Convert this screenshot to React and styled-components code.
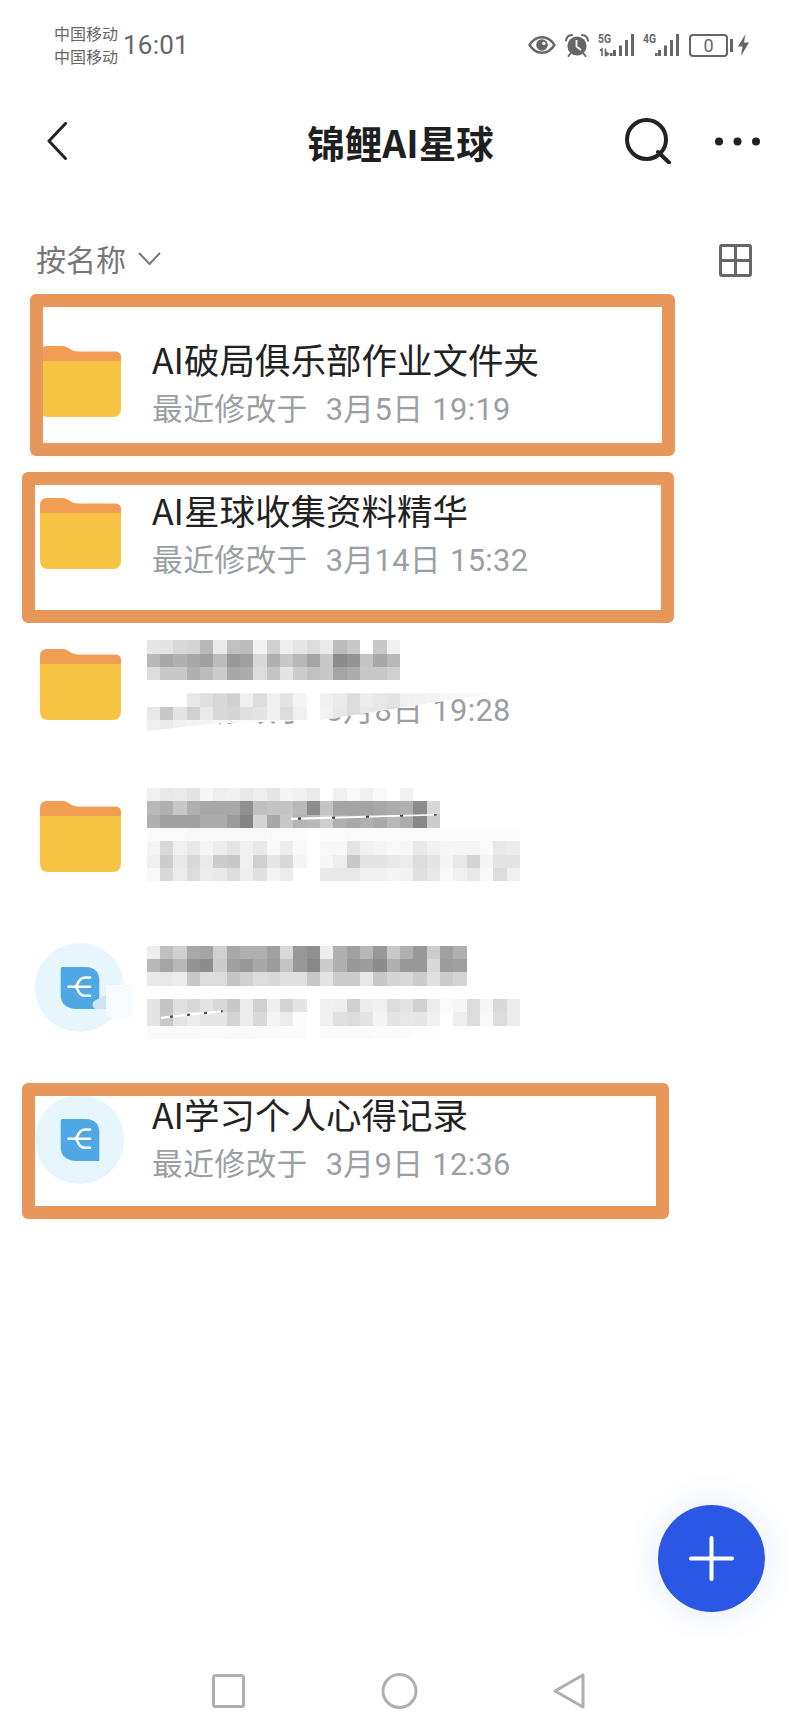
import React from 'react';
import styled, {createGlobalStyle} from 'styled-components';

const GlobalStyle = createGlobalStyle`
  html, body {
    margin: 0;
    padding: 0;
    background: #fff;
  }
  body {
    font-family: Roboto, "Noto Sans CJK SC", sans-serif;
  }
`

const Page = styled.div`
  position: relative;
  width: 800px;
  height: 1733px;
  overflow: hidden;
  display: flex;
  flex-direction: column;
  background: #fff;
`

const StatusBar = styled.div`
  height: 92px;
  box-sizing: border-box;
  padding: 22px 51px 0 54px;
  display: flex;
  align-items: flex-start;
  justify-content: space-between;
  color: #666;
`

const StatusLeft = styled.div`
  display: flex;
  align-items: center;
  gap: 5px;
`

const Carriers = styled.div`
  font-size: 16px;
  line-height: 23px;
  font-family: "Noto Sans CJK SC", sans-serif;
`

const Clock = styled.div`
  font-size: 26px;
  letter-spacing: .2px;
`

const StatusIcons = styled.div`
  display: flex;
  align-items: center;
  height: 46px;
`

const Battery = styled.div`
  width: 39px;
  height: 23px;
  box-sizing: border-box;
  margin-left: 9px;
  border: 2px solid #666;
  border-radius: 4px;
  font-size: 18px;
  line-height: 19px;
  text-align: center;
`

const BatteryCap = styled.div`
  width: 3px;
  height: 13px;
  margin: 0 5px 0 2px;
  background: #666;
`

const Header = styled.div`
  height: 98px;
  box-sizing: border-box;
  padding: 0 46px 0 47px;
  display: grid;
  grid-template-columns: 1fr auto 1fr;
  align-items: center;
`

const Title = styled.div`
  font-family: "Noto Sans CJK SC", sans-serif;
  font-size: 37.5px;
  font-weight: 700;
  color: #1f1f1f;
`

const HeaderActions = styled.div`
  justify-self: end;
  margin-right: -6px;
  display: flex;
  align-items: center;
  gap: 44px;
`

const SortBar = styled.div`
  height: 76px;
  box-sizing: border-box;
  margin-top: 32px;
  padding: 0 48px 0 36px;
  display: flex;
  align-items: center;
  justify-content: space-between;
`

const SortLabel = styled.div`
  display: flex;
  align-items: center;
  gap: 12px;
  margin-bottom: 4px;
  font-family: "Noto Sans CJK SC", sans-serif;
  font-size: 30px;
  color: #777;
`

const List = styled.div`
  margin-top: 8px;
  display: flex;
  flex-direction: column;
`

const Row = styled.div`
  height: 151.5px;
  box-sizing: border-box;
  padding-left: 39.5px;
  display: grid;
  grid-template-columns: 112.5px 1fr;
  align-items: center;
`

const CircleSlot = styled.div`
  margin-left: -4.5px;
  display: flex;
`

const TextBlock = styled.div`
  margin-top: ${props => props.$shift || 0}px;
  display: flex;
  flex-direction: column;
`

const Name = styled.div`
  font-family: "Noto Sans CJK SC", sans-serif;
  font-size: 35.5px;
  line-height: 50px;
  color: #222;
`

const Meta = styled.div`
  margin-top: 4px;
  font-size: 30.8px;
  letter-spacing: .35px;
  word-spacing: 1px;
  line-height: 44px;
  color: #9b9fa4;
  white-space: pre;
`

const BlurStack = styled.div`
  margin-top: ${props => props.$shift || 0}px;
  margin-left: -5.33px;
  display: flex;
  flex-direction: column;
  gap: ${props => props.$gap}px;
`

const CoveredMeta = styled.div`
  position: relative;
  height: 40px;
  margin-left: 5.33px;
`

const MetaBehind = styled(Meta)`
  margin-top: -4.5px;
`

const MosaicGrid = styled.div`
  position: relative;
  display: grid;
  grid-template-columns: repeat(${props => props.$cols}, 13.33px);
  grid-auto-rows: 13.33px;
  width: max-content;
`

const Cell = styled.div``

const CoverMosaic = styled(MosaicGrid)`
  position: absolute;
  top: 0;
  left: -5.33px;
  background: #fff;
  clip-path: polygon(0 0, 347px 0, 173px 27px, 173px 27px, 160px 27px, 70px 30px, 0 38px);
`

const Streak = styled.div`
  position: absolute;
  background: repeating-linear-gradient(90deg, #fff 0 9px, #555 9px 12px, #fff 12px 17px);
`

const TitleStreak = styled(Streak)`
  left: 144px;
  top: 26px;
  width: 146px;
  height: 6px;
  background: repeating-linear-gradient(90deg, #fff 0 7px, #444 7px 10px, #fff 10px 34px);
  clip-path: polygon(0 60%, 100% 0, 100% 25%, 0 100%);
`

const NoteStreak = styled(Streak)`
  left: 14px;
  top: 11px;
  width: 62px;
  height: 9px;
  clip-path: polygon(0 75%, 100% 0, 100% 25%, 0 100%);
`

const Highlight = styled.div`
  position: absolute;
  box-sizing: border-box;
  left: ${props => props.$left}px;
  top: ${props => props.$top}px;
  width: ${props => props.$width}px;
  height: ${props => props.$height}px;
  border: 13px solid #e69759;
  border-radius: 6px;
  pointer-events: none;
`

const Fab = styled.div`
  position: absolute;
  left: 658px;
  top: 1505px;
  width: 107px;
  height: 107px;
  border-radius: 50%;
  background: #2a57e3;
  box-shadow: 0 0 36px rgba(42, 87, 227, .12);
  display: flex;
  align-items: center;
  justify-content: center;
`

const NavBar = styled.div`
  margin-top: auto;
  padding: 0 215px 24px 212px;
  display: flex;
  align-items: center;
  justify-content: space-between;
`

function Mosaic({cols, rows, as: Grid = MosaicGrid, children}) {
  return (
    <Grid $cols={cols}>
      {rows.flatMap((row, r) => row.split(' ').map((tone, c) => (
        <Cell key={r + '-' + c} style={{background: tone === '..' ? 'transparent' : '#' + tone + tone + tone}} />
      )))}
      {children}
    </Grid>
  )
}

function EyeIcon() {
  return (
    <svg width="28" height="18" viewBox="0 0 28 18">
      <path d="M1.5 9C5 3.5 9 1.2 14 1.2S23 3.5 26.5 9C23 14.5 19 16.8 14 16.8S5 14.5 1.5 9Z" fill="none" stroke="#666" strokeWidth="2.4" />
      <circle cx="14" cy="9" r="5.8" fill="#666" />
      <circle cx="15.8" cy="7.4" r="1.7" fill="#fff" />
    </svg>
  )
}

function AlarmIcon() {
  return (
    <svg width="24" height="23" viewBox="0 0 24 23" style={{marginLeft: 9}}>
      <circle cx="12" cy="12" r="9.6" fill="#666" />
      <path d="M1 6.5C1.5 3 3.5 1.2 7 1M23 6.5C22.5 3 20.5 1.2 17 1M5.5 19.5L3.5 22M18.5 19.5L20.5 22" fill="none" stroke="#666" strokeWidth="2" strokeLinecap="round" />
      <path d="M11.5 6V12.5L16 16" fill="none" stroke="#fff" strokeWidth="1.8" />
    </svg>
  )
}

function SignalIcon({label, sub}) {
  const bars = [[15, 17, 6], [21, 12.5, 10.5], [27, 7, 16], [33, 1, 22]];
  return (
    <svg width="37" height="24" viewBox="0 0 37 24" style={{marginLeft: sub ? 9 : 8}}>
      <text x="0" y="10" fontFamily="Roboto" fontWeight="700" fontSize="12" fill="#666" textLength="13" lengthAdjust="spacingAndGlyphs">{label}</text>
      {sub && <path d="M2 17.5L4 16V23M7.5 15.5V23M7.5 19L10.5 21L7.5 23" fill="none" stroke="#666" strokeWidth="1.6" />}
      {bars.map(([x, y, h]) => <rect key={x} x={x} y={y} width="3" height={h} fill="#666" />)}
      <rect x="12" y="20" width="2.6" height="3" fill="#666" />
    </svg>
  )
}

function BoltIcon() {
  return (
    <svg width="11" height="22" viewBox="0 0 11 22">
      <path d="M7.5 0L0 12.5H4.5L3 22L11 8.5H6Z" fill="#666" />
    </svg>
  )
}

function BackIcon() {
  return (
    <svg width="20" height="38" viewBox="0 0 20 38">
      <path d="M18.5 1.5L2 19L18.5 36.5" fill="none" stroke="#222" strokeWidth="3" strokeLinecap="round" strokeLinejoin="round" />
    </svg>
  )
}

function SearchIcon() {
  return (
    <svg width="46" height="46" viewBox="0 0 46 46">
      <circle cx="21.5" cy="21.5" r="19.5" fill="none" stroke="#222" strokeWidth="4" />
      <path d="M33 34L44 44.5" stroke="#222" strokeWidth="4" strokeLinecap="round" />
    </svg>
  )
}

function DotsIcon() {
  return (
    <svg width="45" height="9" viewBox="0 0 45 9">
      <circle cx="4" cy="4.5" r="4" fill="#222" />
      <circle cx="22.5" cy="4.5" r="4" fill="#222" />
      <circle cx="41" cy="4.5" r="4" fill="#222" />
    </svg>
  )
}

function ChevronIcon() {
  return (
    <svg width="23" height="13" viewBox="0 0 23 13">
      <path d="M1 1L11.5 12L22 1" fill="none" stroke="#777" strokeWidth="2" />
    </svg>
  )
}

function GridIcon() {
  return (
    <svg width="33" height="33" viewBox="0 0 33 33">
      <rect x="1.5" y="1.5" width="30" height="30" rx="1.5" fill="none" stroke="#666" strokeWidth="3" />
      <path d="M16.5 2V31M2 16.5H31" stroke="#666" strokeWidth="3" />
    </svg>
  )
}

function FolderIcon() {
  return (
    <svg width="81" height="71" viewBox="0 0 81 71" style={{display: 'block'}}>
      <path d="M0 15H81V62Q81 71 73 71H8Q0 71 0 62Z" fill="#f6c343" />
      <path d="M0 15V7Q0 0 7 0H22C29 0 30 5.5 39 5.5H75Q81 5.5 81 11V15Z" fill="#f19e54" />
    </svg>
  )
}

function NoteIcon({smudged}) {
  return (
    <svg width="89" height="89" viewBox="0 0 89 89" style={{display: 'block', overflow: 'visible'}}>
      <circle cx="44.5" cy="44.5" r="44.5" fill="#e7f5fc" />
      <path d="M27.7 24H51C59 24 64.3 29 64.3 37V66H41C33 66 25.7 61 25.7 53V26Q25.7 24 27.7 24Z" fill="#4fa8e4" />
      <path d="M55 34.5H50C45 34.5 43.5 39 41 43.7C43.5 48.5 45 52.7 50 52.7H55M41 43.7H55M33.5 43.7H41" fill="none" stroke="#fff" strokeWidth="2.6" strokeLinecap="round" strokeLinejoin="round" />
      {smudged && <path d="M71 52V66H62C58 66 56 62 59 58Z" fill="#cfe3f3" />}
      {smudged && <rect x="71" y="42" width="27" height="32" fill="#f8fbfd" />}
    </svg>
  )
}

function SquareNav() {
  return (
    <svg width="33" height="34" viewBox="0 0 33 34">
      <rect x="1.5" y="1.5" width="30" height="31" rx="2" fill="none" stroke="#b0b0b0" strokeWidth="3" />
    </svg>
  )
}

function CircleNav() {
  return (
    <svg width="37" height="36" viewBox="0 0 37 36">
      <circle cx="18.5" cy="18" r="16.5" fill="none" stroke="#b0b0b0" strokeWidth="3" />
    </svg>
  )
}

function TriangleNav() {
  return (
    <svg width="32" height="36" viewBox="0 0 32 36">
      <path d="M30 2V34L2 18Z" fill="none" stroke="#b0b0b0" strokeWidth="3" strokeLinejoin="round" />
    </svg>
  )
}

const blurThreeTitle = [
  'e6 e4 d8 d4 b8 ea c0 bc f2 d0 ee e6 dc ea bc c8 ff c8 f0',
  'b8 a8 b0 a8 a0 bc 98 a0 d8 b0 c8 b8 a4 c8 8c 94 c4 a8 b8',
  'dc c8 c8 b0 bc cc a8 ac dc c4 e4 cc c0 c8 a4 ac c8 c8 d0',
]

const blurThreeMeta = [
  '.. .. .. e8 e0 d8 d0 f0 dc f0 e4 f4 ff f0 ea dc ec e8 e4 f0 f2 f4 f6 f8 f8 fa',
  'e8 c8 e4 d0 ea d8 d4 e0 e4 f0 dc f0 ff f2 e8 dc e8 e8 dc e8 f0 f4 f8 fa fc ff',
  'f0 ea f0 f4 f4 f8 f8 fa fa fc fc ff ff ff ff ff ff ff ff ff ff ff ff ff ff ff',
]

const blurFourTitle = [
  'f0 e8 ea e4 f6 ee f0 e8 ee e6 f4 f0 ea ff f0 f8 f0 f8 ff f2 ff ff',
  'b8 b0 c8 b0 a8 a8 a8 90 c0 c4 c4 b8 8c c4 a4 a4 a4 a8 ac b0 8c d8',
  'b0 a0 a0 a0 ac ac 9c 84 d4 a8 c8 b4 b8 d0 b0 a8 b0 a8 b8 ac 88 cc',
]

const blurFourMeta = [
  'fa fa fa f8 f8 f8 f8 f8 f8 fa fa fa ff fc fc fa fa fa fa fa fa fa fc fc fc fc fc fc',
  'f4 d8 f0 e8 f4 ec e4 f0 e8 f8 ec f8 ff f8 f8 e4 f0 f4 f8 f6 e8 f0 f6 f4 f4 fa e8 ec',
  'f0 cc e8 d8 ea cc c8 f0 d0 e6 d8 f4 ff f6 ee c8 e4 e4 e8 ec dc e4 f4 e8 d4 f4 e4 e4',
  'f8 d8 ec dc ec e8 dc ee e0 f4 ec ff ff e8 e8 e8 f0 f0 f4 f2 e0 e8 f8 f0 e8 f8 dc f0',
]

const blurFiveTitle = [
  'ee c0 d0 a8 a4 d0 a8 b0 b0 a0 d8 98 90 ec b0 a0 b8 98 c8 b0 98 cc a0 b0',
  'b8 a4 b8 94 8c cc a0 98 a8 9c c4 98 88 cc b0 98 9c 8c b0 98 98 d8 9c a0',
  'e8 e8 ec c8 dc dc c4 d0 dc d8 e0 e0 c8 e4 cc cc e8 c8 d4 d8 cc e0 cc d4',
]

const blurFiveMeta = [
  'e4 c4 e0 d8 e4 d8 c8 ec d0 ee d4 e4 ff f0 ee d0 ec f0 dc e4 d0 ec fa f6 dc f6 d8 ec',
  'e4 c8 e4 ec e6 e6 d4 ec d8 f4 ec fc ff f0 e0 dc e4 f4 e4 e8 e6 f0 ff ee dc f8 dc ec',
  'fa fa fa fa fb fb fa fa fb fb fc fc ff fb fb fb fb fc fc fc fd fd ff ff ff ff ff ff',
]

export default function App() {
  return (
    <Page>
      <GlobalStyle />
      <StatusBar>
        <StatusLeft>
          <Carriers>中国移动<br />中国移动</Carriers>
          <Clock>16:01</Clock>
        </StatusLeft>
        <StatusIcons>
          <EyeIcon />
          <AlarmIcon />
          <SignalIcon label="5G" sub />
          <SignalIcon label="4G" />
          <Battery>0</Battery>
          <BatteryCap />
          <BoltIcon />
        </StatusIcons>
      </StatusBar>

      <Header>
        <BackIcon />
        <Title>锦鲤AI星球</Title>
        <HeaderActions>
          <SearchIcon />
          <DotsIcon />
        </HeaderActions>
      </Header>

      <SortBar>
        <SortLabel>按名称 <ChevronIcon /></SortLabel>
        <GridIcon />
      </SortBar>

      <List>
        <Row>
          <FolderIcon />
          <TextBlock $shift={2}>
            <Name>AI破局俱乐部作业文件夹</Name>
            <Meta>最近修改于  3月5日 19:19</Meta>
          </TextBlock>
        </Row>
        <Row>
          <FolderIcon />
          <TextBlock $shift={1}>
            <Name>AI星球收集资料精华</Name>
            <Meta>最近修改于  3月14日 15:32</Meta>
          </TextBlock>
        </Row>
        <Row>
          <FolderIcon />
          <BlurStack $gap={13} $shift={4}>
            <Mosaic cols={19} rows={blurThreeTitle} />
            <CoveredMeta>
              <MetaBehind>最近修改于  3月8日 19:28</MetaBehind>
              <Mosaic cols={26} rows={blurThreeMeta} as={CoverMosaic} />
            </CoveredMeta>
          </BlurStack>
        </Row>
        <Row>
          <FolderIcon />
          <BlurStack $gap={0} $shift={-3}>
            <Mosaic cols={22} rows={blurFourTitle}>
              <TitleStreak />
            </Mosaic>
            <Mosaic cols={28} rows={blurFourMeta} />
          </BlurStack>
        </Row>
        <Row>
          <CircleSlot><NoteIcon smudged /></CircleSlot>
          <BlurStack $gap={13.3} $shift={9}>
            <Mosaic cols={24} rows={blurFiveTitle} />
            <Mosaic cols={28} rows={blurFiveMeta}>
              <NoteStreak />
            </Mosaic>
          </BlurStack>
        </Row>
        <Row>
          <CircleSlot><NoteIcon /></CircleSlot>
          <TextBlock $shift={-2}>
            <Name>AI学习个人心得记录</Name>
            <Meta>最近修改于  3月9日 12:36</Meta>
          </TextBlock>
        </Row>
      </List>

      <Highlight $left={29.5} $top={294} $width={645} $height={162} />
      <Highlight $left={22} $top={472} $width={652} $height={151} />
      <Highlight $left={22} $top={1083} $width={647} $height={136} />

      <Fab>
        <svg width="45" height="45" viewBox="0 0 45 45">
          <path d="M22.5 2V43M2 22.5H43" stroke="#fff" strokeWidth="4" strokeLinecap="round" />
        </svg>
      </Fab>

      <NavBar>
        <SquareNav />
        <CircleNav />
        <TriangleNav />
      </NavBar>
    </Page>
  )
}
